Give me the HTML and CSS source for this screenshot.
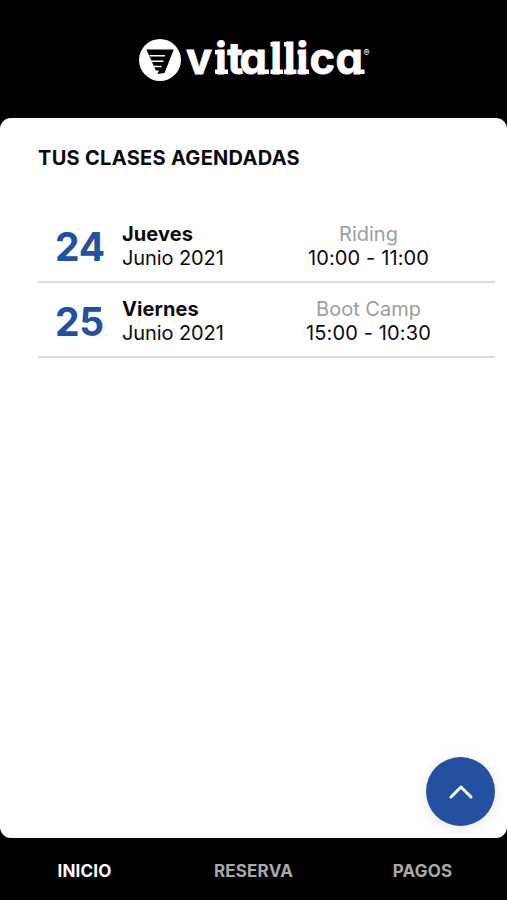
FILE: index.html
```html
<!DOCTYPE html>
<html lang="es">
<head>
<meta charset="utf-8">
<meta name="viewport" content="width=device-width, initial-scale=1">
<title>Vitallica</title>
<link rel="stylesheet" href="styles.css">
</head>
<body>
<div class="app">
  <header class="header">
    <svg class="logo" viewBox="0 0 236 48" role="img" aria-label="vitallica">
      <circle cx="22" cy="24" r="21" fill="#fff"/>
      <path d="M8.3 13.5H35.8L26.5 37L19.5 38L21 34.5H17.8Z" fill="#000"/>
      <path d="M11.5 19.8H27M13 25.3H25.5M15 30.5H23.5" stroke="#fff" stroke-width="1.4"/>
      <text class="wordmark" x="48 77 89.3 101.5 132.2 145.7 158.6 171.4 197.5" y="38">vitallica</text>
      <path class="slabs" d="M77 33.5H90V38H77ZM77 14H84V18.5H77ZM132.5 33.5H145V38H132.5ZM132.5 6H139V10.5H132.5ZM146 33.5H158.5V38H146ZM146 6H152V10.5H146ZM159.5 33.5H171V38H159.5ZM159.5 14H166V18.5H159.5ZM124 33.5H131V38H124ZM219 33.5H226.5V38H219Z"/>
      <text class="registered" x="225.5" y="20">®</text>
    </svg>
  </header>
  <main class="panel">
    <h1 class="title">TUS CLASES AGENDADAS</h1>
    <ul class="classes">
      <li class="class-row">
        <span class="day">24</span>
        <div class="date"><strong>Jueves</strong><span>Junio 2021</span></div>
        <div class="session"><span class="activity">Riding</span><span class="time">10:00 - 11:00</span></div>
      </li>
      <li class="class-row">
        <span class="day">25</span>
        <div class="date"><strong>Viernes</strong><span>Junio 2021</span></div>
        <div class="session"><span class="activity">Boot Camp</span><span class="time">15:00 - 10:30</span></div>
      </li>
    </ul>
    <button class="fab" aria-label="Subir">
      <svg width="24" height="16" viewBox="0 0 24 16"><path d="M2 13L12 3L22 13" fill="none" stroke="#fff" stroke-width="2.9" stroke-linecap="round" stroke-linejoin="round"/></svg>
    </button>
  </main>
  <nav class="tabs">
    <a class="tab active">INICIO</a>
    <a class="tab">RESERVA</a>
    <a class="tab">PAGOS</a>
  </nav>
</div>
</body>
</html>
```
FILE: styles.css
```css
* { box-sizing: border-box; }
body {
  margin: 0;
  background: #000;
  color: #0b0b0c;
  font-family: Inter, "Liberation Sans", sans-serif;
}
.app { display: flex; flex-direction: column; height: 900px; }
.header { height: 118px; flex: none; padding-top: 36px; }
.logo { display: block; width: 236px; height: 48px; margin-left: 138px; }
.wordmark {
  font: 700 43.5px Inter, sans-serif;
  font-feature-settings: "cv11";
  fill: #fff;
  stroke: #fff;
  stroke-width: .8px;
}
.slabs { fill: #fff; }
.registered { font: 9px Inter, sans-serif; fill: #fff; }
.panel {
  position: relative;
  flex: 1;
  background: #fff;
  border-radius: 11px;
  padding: 28px 12px 0 38px;
}
.title { margin: 0; font-size: 20px; line-height: 24px; font-weight: 650; letter-spacing: .3px; white-space: nowrap; }
.classes { list-style: none; margin: 38px 0 0; padding: 0; }
.class-row {
  display: grid;
  grid-template-columns: 84px 120px 1fr;
  align-items: center;
  height: 75px;
  padding-top: 3px;
  border-bottom: 2px solid #dcdcdd;
  font-size: 20px;
  line-height: 24.5px;
}
.day { padding: 1px 0 0 17px; font-size: 39px; line-height: 49px; font-weight: 650; letter-spacing: -.2px; color: #2350a0; }
.date, .session { display: flex; flex-direction: column; white-space: nowrap; }
.date strong { font-weight: 650; letter-spacing: .1px; }
.date span { letter-spacing: -.1px; }
.session { align-items: center; }
.activity { color: #9d9da0; }
.time { letter-spacing: .13px; }
.fab {
  position: absolute;
  right: 12px;
  bottom: 12px;
  width: 69px;
  height: 69px;
  padding: 0;
  border: 0;
  border-radius: 50%;
  background: #2350a0;
  box-shadow: 0 2px 14px rgba(0, 0, 0, .1);
  display: grid;
  place-items: center;
}
.tabs { height: 62px; flex: none; display: grid; grid-template-columns: repeat(3, 1fr); padding-top: 23px; }
.tab { text-align: center; color: #a9a9aa; font-size: 17px; line-height: 21px; font-weight: 650; letter-spacing: .2px; }
.active { color: #fff; }
```
